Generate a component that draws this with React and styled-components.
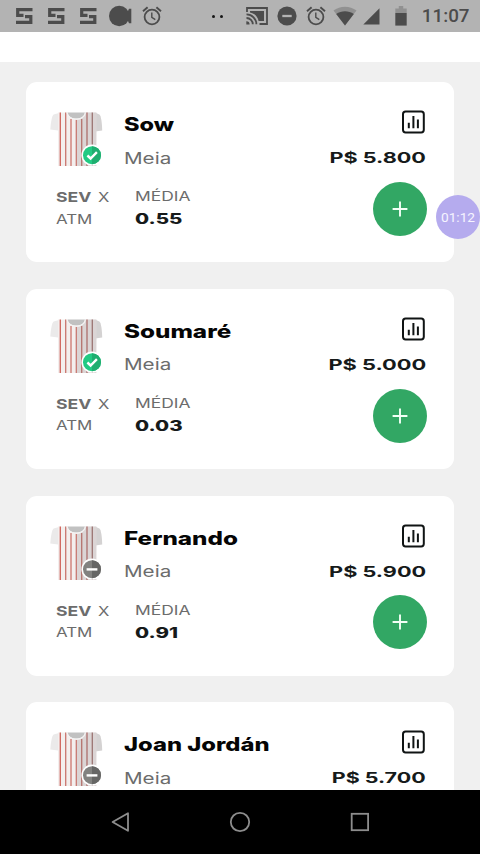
import React from 'react';
import styled, { createGlobalStyle } from 'styled-components';

const GlobalStyle = createGlobalStyle`
  * {
    box-sizing: border-box;
  }

  body {
    margin: 0;
    background: #f0f0f0;
    font-family: Inter, 'Liberation Sans', sans-serif;
  }
`;

const Screen = styled.div`
  position: relative;
  display: flex;
  flex-direction: column;
  width: 480px;
  height: 854px;
  overflow: hidden;
  background: #f0f0f0;
`;

// System bars
const StatusBar = styled.header`
  display: flex;
  align-items: center;
  flex: none;
  height: 32px;
  padding: 0 10.5px 0 16px;
  background: #b3b3b3;
  color: #4c4c4c;
`;

const StatusGroup = styled.div`
  display: flex;
  align-items: center;
  gap: ${({ $gap }) => $gap}px;
  margin-left: ${({ $left }) => $left || 0}px;
`;

const Dot = styled.span`
  width: 3px;
  height: 3px;
  border-radius: 50%;
  background: #161616;
`;

const Clock = styled.span`
  margin-left: auto;
  font-family: Roboto, sans-serif;
  font-size: 18.8px;
  font-weight: 500;
  line-height: 33px;
`;

const TopStrip = styled.div`
  flex: none;
  height: 30px;
  background: #ffffff;
`;

const NavBar = styled.footer`
  display: flex;
  align-items: center;
  justify-content: space-between;
  flex: none;
  height: 64px;
  padding: 0 108px;
  background: #000000;
`;

// Player list
const PlayerList = styled.main`
  display: flex;
  flex-direction: column;
  flex: 1;
  gap: 26.8px;
  min-height: 0;
  padding: 20px 26.5px 0 26px;
  overflow: hidden;
`;

const Card = styled.article`
  flex: none;
  height: 180px;
  padding: 28px 27px 0 24px;
  border-radius: 11px;
  background: #ffffff;
`;

const CardTop = styled.div`
  display: flex;
  height: 72px;
`;

const CardBottom = styled.div`
  display: flex;
  padding-left: 6px;
`;

const Identity = styled.div`
  flex: 1;
  padding-left: 18px;
`;

const PriceColumn = styled.div`
  display: flex;
  flex-direction: column;
  align-items: flex-end;
  gap: 12px;

  svg {
    margin-right: 1.5px;
  }
`;

const Wide = styled.div`
  width: max-content;
  white-space: nowrap;
  transform: scaleX(${({ $stretch }) => $stretch});
  transform-origin: left center;
`;

const Name = styled(Wide)`
  font-size: 18.5px;
  font-weight: 800;
  line-height: 28px;
  color: #050505;
`;

const Position = styled(Wide)`
  margin-top: 8.5px;
  font-size: 15.5px;
  line-height: 24px;
  color: #6c6c6c;
`;

const Price = styled(Wide)`
  transform-origin: right center;
  margin-right: 0.5px;
  font-size: 15px;
  font-weight: 700;
  line-height: 24.5px;
  color: #161a1a;
`;

const Match = styled.div`
  width: 79px;
  padding-top: 5px;
`;

const MatchLine = styled.div`
  display: flex;
  gap: ${({ $gap }) => $gap || 0}px;
  height: 21.5px;
`;

const Team = styled(Wide)`
  font-size: 13.3px;
  font-weight: ${({ $home }) => ($home ? 700 : 400)};
  line-height: 21.5px;
  color: #6c6c6c;
`;

const Average = styled.div`
  flex: 1;
  padding-top: 3px;
`;

const AverageLabel = styled(Wide)`
  font-size: 13.3px;
  line-height: 22px;
  color: #6c6c6c;
`;

const AverageValue = styled(Wide)`
  font-size: 13.9px;
  font-weight: 800;
  line-height: 25px;
  color: #161a1a;
`;

const AddButton = styled.button`
  display: flex;
  align-items: center;
  justify-content: center;
  width: 54px;
  height: 54px;
  margin: -0.3px -0.5px 0 0;
  padding: 0;
  border: 0;
  border-radius: 50%;
  background: #32a764;
`;

// Floating recorder bubble, over the list
const RecorderBubble = styled.div`
  position: absolute;
  top: 195px;
  left: 436px;
  width: 44px;
  height: 44px;
  border-radius: 50%;
  background: #b5abee;
  color: #f6f4ff;
  font-family: Roboto, sans-serif;
  font-size: 13.7px;
  line-height: 45px;
  text-align: center;
`;

const SIcon = () => (
  <svg width="17" height="16" viewBox="0 0 17 16" fill="none" stroke="currentColor" strokeWidth="3.2">
    <path d="M16.5 1.6H1.7V7.3H7.5M9 8.7H14.8V14.4H0" />
  </svg>
);

const CameraIcon = () => (
  <svg width="23" height="22" viewBox="0 0 23 22" fill="currentColor">
    <circle cx="10.2" cy="11" r="10.2" />
    <path d="M16 6h3l1-2.2h2.3v14.4H20L19 16h-3z" />
  </svg>
);

const AlarmIcon = () => (
  <svg width="20" height="20" viewBox="0 0 20 20" fill="none" stroke="currentColor">
    <circle cx="10" cy="11" r="7.4" strokeWidth="1.8" />
    <path d="M1 5.2L5.6 1.2M14.4 1.2L19 5.2" strokeWidth="1.9" />
    <path d="M9.8 6.6V11.4L13.3 13.7" strokeWidth="1.4" />
  </svg>
);

const CastIcon = () => (
  <svg width="22" height="18" viewBox="0 0 22 18" fill="none" stroke="currentColor" strokeWidth="1.8">
    <path d="M1 5V1H21V17H13.5" />
    <path d="M4 4H18V14H12.6C11.6 9.3 8.6 6.2 4 5.4Z" fill="currentColor" stroke="none" />
    <path d="M0.5 7.4A9.8 9.8 0 0 1 10.4 17.3M0.5 11A6.2 6.2 0 0 1 6.8 17.3" />
    <path d="M0.3 14.2A3.3 3.3 0 0 1 3.6 17.6H0.3Z" fill="currentColor" stroke="none" />
  </svg>
);

const DoNotDisturbIcon = () => (
  <svg width="20" height="20" viewBox="0 0 20 20">
    <circle cx="10" cy="10" r="9.6" fill="currentColor" />
    <path d="M5.3 10H14.7" stroke="#b3b3b3" strokeWidth="2.3" />
  </svg>
);

const WifiIcon = () => (
  <svg width="24" height="20" viewBox="0 0 24 20" fill="currentColor">
    <path d="M12 19.4L0.5 4.6C7 -0.6 17 -0.6 23.5 4.6Z" opacity="0.32" />
    <path d="M12 19.4L3.2 8C8.4 4.4 15.6 4.4 20.8 8Z" />
  </svg>
);

const SignalIcon = () => (
  <svg width="17" height="17" viewBox="0 0 17 17" fill="currentColor">
    <path d="M16.5 0.3V16.5H0.3Z" />
  </svg>
);

const BatteryIcon = () => (
  <svg width="12" height="20" viewBox="0 0 12 20" fill="currentColor">
    <path d="M0.3 7V2.4H3.8V0H8.2V2.4H11.7V7Z" opacity="0.32" />
    <path d="M0.3 7H11.7V19.6H0.3Z" />
  </svg>
);

const StatsIcon = () => (
  <svg width="24" height="24" viewBox="0 0 24 24" fill="none" stroke="#101414">
    <rect x="2" y="1.6" width="20.8" height="20.8" rx="2.6" strokeWidth="2" />
    <path d="M7.8 12.8V18.2M12.4 6V18.2M16.9 9.6V18.2" strokeWidth="2" />
  </svg>
);

const PlusIcon = () => (
  <svg width="16" height="16" viewBox="0 0 16 16" stroke="#f2fff6" strokeWidth="1.9">
    <path d="M8 0.6V15.4M0.6 8H15.4" />
  </svg>
);

const stripes = [10.3, 15.7, 21, 26.3, 31.7, 37, 42.3];
const stripeColors = ['#cf625a', '#c9756e', '#cd756d', '#c87971', '#b5736e', '#ad6f6c', '#9b7472'];

const Shirt = ({ status }) => {
  const likely = status === 'likely';
  return (
    <svg width="56" height="60" viewBox="0 0 56 60">
      <path d="M9 3L3.6 4.4C2 5.6 .8 12 .3 19.6L8 20.4Z" fill="#ebeaea" />
      <path d="M46 3L49.4 4.4C51 5.6 52 12 52.2 20.4L45.2 21.4Z" fill="#d4d2d2" />
      <path d="M8 2.4H17.5C19 11.5 33.5 11.5 35 2.4H46V22L47 56H8Z" fill="#f3efee" />
      <path d="M26.5 9.5C31 9.5 34.5 7 35 2.4H46.5V22L46 56H26.5Z" fill="#dbd5d5" />
      <path d="M17.5 2.4H35C34 10.5 18.5 10.5 17.5 2.4Z" fill="#c1c1c1" />
      {stripes.map((x, i) => (
        <path
          key={x}
          d={`M${x} ${i > 1 && i < 5 ? 9 : 2.5}V56`}
          stroke={stripeColors[i]}
          strokeWidth="1.3"
        />
      ))}
      <path d="M17 2.4C18.5 11.6 34 11.6 35.5 2.4" fill="none" stroke="#f4f2f2" strokeWidth="1.3" />
      <circle cx="42" cy="45.2" r="10.6" fill="#ffffff" />
      <circle cx="42" cy="45.2" r="9" fill={likely ? '#22ca83' : '#828280'} />
      <path d="M42 36.2A9 9 0 0 1 42 54.2Z" fill={likely ? '#1fae70' : '#666665'} />
      <path
        d={likely ? 'M37.4 45.5L40.6 48.5L46.9 42.2' : 'M36.6 45.4H47.4'}
        fill="none"
        stroke="#ffffff"
        strokeWidth="2.4"
      />
    </svg>
  );
};

const players = [
  { name: 'Sow', price: 'P$ 5.800', average: '0.55', status: 'likely', nameStretch: 1.27, priceStretch: 1.44 },
  { name: 'Soumaré', price: 'P$ 5.000', average: '0.03', status: 'likely', nameStretch: 1.31, priceStretch: 1.455 },
  { name: 'Fernando', price: 'P$ 5.900', average: '0.91', status: 'doubt', nameStretch: 1.31, priceStretch: 1.445 },
  { name: 'Joan Jordán', price: 'P$ 5.700', status: 'doubt', nameStretch: 1.285, priceStretch: 1.43 },
];

const PlayerCard = ({ player }) => (
  <Card>
    <CardTop>
      <Shirt status={player.status} />
      <Identity>
        <Name $stretch={player.nameStretch}>{player.name}</Name>
        <Position $stretch={1.33}>Meia</Position>
      </Identity>
      <PriceColumn>
        <StatsIcon />
        <Price $stretch={player.priceStretch}>{player.price}</Price>
      </PriceColumn>
    </CardTop>
    {player.average && (
      <CardBottom>
        <Match>
          <MatchLine $gap={15.5}>
            <Team $home $stretch={1.32}>SEV</Team>
            <Team $stretch={1.25}>X</Team>
          </MatchLine>
          <MatchLine>
            <Team $stretch={1.27}>ATM</Team>
          </MatchLine>
        </Match>
        <Average>
          <AverageLabel $stretch={1.31}>MÉDIA</AverageLabel>
          <AverageValue $stretch={1.47}>{player.average}</AverageValue>
        </Average>
        <AddButton>
          <PlusIcon />
        </AddButton>
      </CardBottom>
    )}
  </Card>
);

const App = () => (
  <>
    <GlobalStyle />
    <Screen>
      <StatusBar>
        <StatusGroup $gap={15}>
          <SIcon />
          <SIcon />
          <SIcon />
        </StatusGroup>
        <StatusGroup $gap={10} $left={12}>
          <CameraIcon />
          <AlarmIcon />
        </StatusGroup>
        <StatusGroup $gap={4.5} $left={50}>
          <Dot />
          <Dot />
        </StatusGroup>
        <StatusGroup $gap={9} $left={23}>
          <CastIcon />
          <DoNotDisturbIcon />
          <AlarmIcon />
        </StatusGroup>
        <StatusGroup $gap={6} $left={7}>
          <WifiIcon />
          <SignalIcon />
        </StatusGroup>
        <StatusGroup $left={15.5}>
          <BatteryIcon />
        </StatusGroup>
        <Clock>11:07</Clock>
      </StatusBar>
      <TopStrip />
      <PlayerList>
        {players.map((player) => (
          <PlayerCard key={player.name} player={player} />
        ))}
      </PlayerList>
      <NavBar>
        <svg width="24" height="24" viewBox="0 0 24 24" fill="none" stroke="#8d8d8d" strokeWidth="1.8">
          <path d="M20 3.2V20.8L4.6 12Z" strokeLinejoin="round" />
        </svg>
        <svg width="24" height="24" viewBox="0 0 24 24" fill="none" stroke="#8d8d8d" strokeWidth="1.8">
          <circle cx="12" cy="12" r="9.2" />
        </svg>
        <svg width="24" height="24" viewBox="0 0 24 24" fill="none" stroke="#8d8d8d" strokeWidth="1.8">
          <rect x="3.7" y="3.8" width="16.4" height="16.4" />
        </svg>
      </NavBar>
      <RecorderBubble>01:12</RecorderBubble>
    </Screen>
  </>
);

export default App;
